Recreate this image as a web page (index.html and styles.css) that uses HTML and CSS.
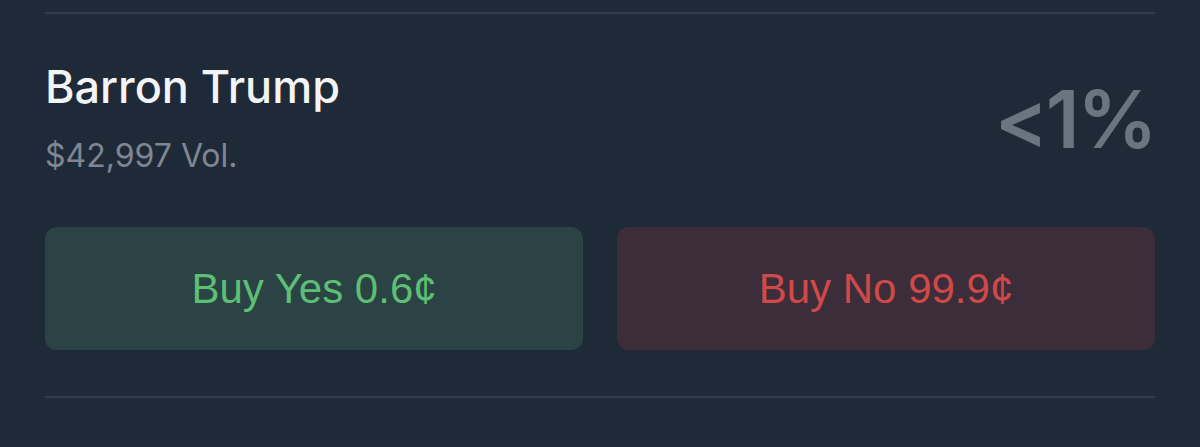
FILE: index.html
```html
<!DOCTYPE html>
<html>
<head>
  <title>Barron Trump market</title>
  <link rel="stylesheet" href="styles.css">
</head>
<body>
  <div class="market">
    <div class="divider"></div>

    <div class="market-head">
      <div class="market-info">
        <h2 class="market-title">Barron Trump</h2>
        <p class="market-volume">$42,997 Vol.</p>
      </div>
      <div class="market-chance">&lt;1%</div>
    </div>

    <div class="market-actions">
      <button class="buy-btn buy-yes">Buy Yes 0.6¢</button>
      <button class="buy-btn buy-no">Buy No 99.9¢</button>
    </div>

    <div class="divider divider-bottom"></div>
  </div>
</body>
</html>
```

FILE: styles.css
```css
body {
  background-color: #1f2a38;
  margin: 0;
  padding: 0;
  font-family: Inter, "Liberation Sans", sans-serif;
}

.market {
  padding: 12px 45px 0;
}

.divider {
  height: 2px;
  background-color: #323d4c;
}

.market-head {
  display: flex;
  justify-content: space-between;
  align-items: flex-start;
  margin-top: 46px;
}

.market-title {
  margin: 0;
  font-size: 45px;
  font-weight: 500;
  line-height: 54px;
  color: #f3f4f6;
}

.market-volume {
  margin: 23px 0 0;
  font-size: 32px;
  line-height: 38px;
  color: #7e8793;
}

.market-chance {
  margin: 14px 0 0 0;
  font-size: 80px;
  font-weight: 600;
  line-height: 90px;
  letter-spacing: -2.5px;
  color: #6b7481;
}

.market-actions {
  display: grid;
  grid-template-columns: 1fr 1fr;
  gap: 34px;
  margin-top: 52px;
}

.buy-btn {
  height: 123px;
  border: none;
  border-radius: 12px;
  font-family: "Liberation Sans", Arial, sans-serif;
  font-size: 42px;
  cursor: pointer;
}

.buy-yes {
  background-color: #2b4345;
  color: #5cbf73;
}

.buy-no {
  background-color: #3b2d3a;
  color: #d14848;
}

.divider-bottom {
  margin-top: 46px;
}
```
